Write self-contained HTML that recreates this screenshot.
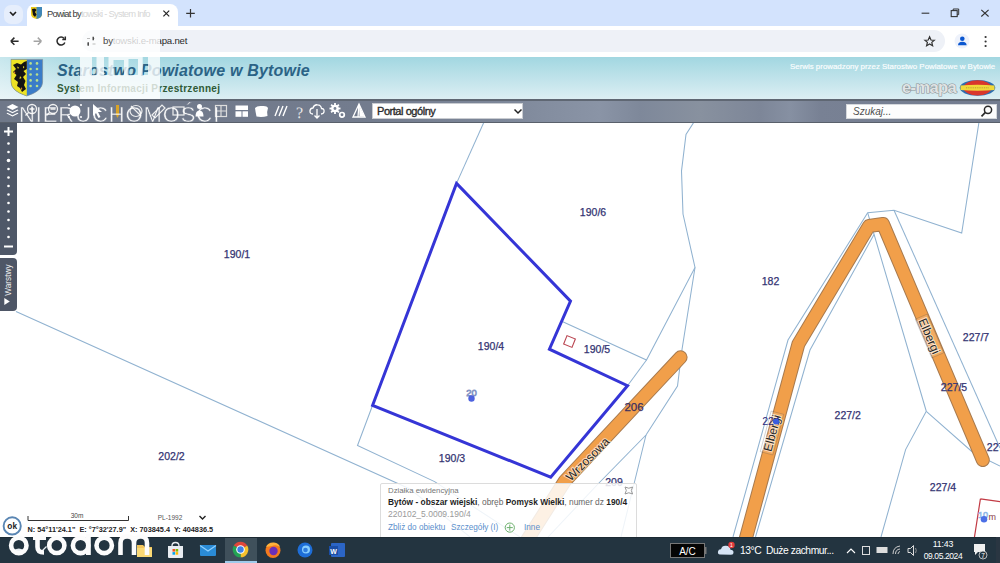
<!DOCTYPE html>
<html><head><meta charset="utf-8">
<style>
*{margin:0;padding:0;box-sizing:border-box}
html,body{width:1000px;height:563px;overflow:hidden;background:#fff;font-family:"Liberation Sans",sans-serif}
.a{position:absolute;white-space:pre}
#tabbar{left:0;top:0;width:1000px;height:26px;background:#d3e3fd}
#tab{left:27px;top:4px;width:151px;height:24px;background:#fff;border-radius:8px 8px 0 0}
#addr{left:0;top:26px;width:1000px;height:31px;background:#fff}
#pill{left:82px;top:30px;width:863px;height:22px;background:#eef1f7;border-radius:11px}
#header{left:0;top:57px;width:1000px;height:42px;background:linear-gradient(90deg,rgba(255,255,255,0.4),rgba(255,255,255,0.15) 60px,rgba(255,255,255,0) 160px),linear-gradient(#a2d7e1,#dceef3)}
#toolbar{left:0;top:99px;width:1000px;height:24px;background:linear-gradient(90deg,#6f7889 0%,#737c8e 37%,#7d8799 50%,#848ea0 55%,#8a94a6 60%,#7e889a 64%,#88919f 70%,#7d8698 76%,#8690a2 79%,#788194 82%,#737c8f 100%);border-top:2px solid #5f6773;border-bottom:1px solid #59606b}
#map{left:0;top:123px;width:1000px;height:414px;background:#fff}
#taskbar{left:0;top:537px;width:1000px;height:26px;background:#233440;border-top:1px solid #1c2a33}
.lbl{position:absolute;font-size:10px;color:#2b2b7c;white-space:pre;line-height:10px}
</style></head><body>
<div id="tabbar" class="a"></div>
<div id="tab" class="a"></div>
<!-- tab bar content -->
<div class="a" style="left:4px;top:5px;width:19px;height:19px;border-radius:7px;background:#e6eefc"></div>
<svg class="a" style="left:0;top:0" width="200" height="28">
  <path d="M10 12 L13 15 L16 12" fill="none" stroke="#1f1f1f" stroke-width="1.6"/>
  <path d="M31 7 H42 V14 Q42 18 36.5 19 Q31 18 31 14 Z" fill="#e8c81a"/>
  <path d="M36.5 7 H42 V14 Q42 18 36.5 19 Z" fill="#3f86b8"/>
  <path d="M32 9 L35 8.5 L36.5 10 L35 12 L36.5 14.5 L35 17 L33 15 L32.5 12 Z" fill="#111"/>
  <path d="M163.4 10.6 L169.2 16.4 M169.2 10.6 L163.4 16.4" stroke="#222" stroke-width="1.15"/>
  <path d="M190.5 9 V17.6 M186.2 13.3 H194.8" stroke="#333" stroke-width="1.2"/>
</svg>
<div class="a" style="left:47px;top:8px;font-size:9.4px;letter-spacing:-0.75px;color:#3a3a3a">Powiat by<span style="color:#d6d6d6">towski - System Info</span></div>
<svg class="a" style="left:900px;top:0" width="100" height="26">
  <path d="M21.6 13.2 H29.3" stroke="#333" stroke-width="1.1"/>
  <rect x="51.2" y="10.6" width="6" height="6" fill="none" stroke="#333" stroke-width="1.1"/>
  <path d="M53.2 10.6 V9 H58.7 V14.6 H57.2" fill="none" stroke="#333" stroke-width="1"/>
  <path d="M81.3 9.8 L88.6 16.5 M88.6 9.8 L81.3 16.5" stroke="#333" stroke-width="1.1"/>
</svg>
<div id="addr" class="a"></div>
<div id="pill" class="a"></div>
<svg class="a" style="left:0;top:26px" width="1000" height="31">
  <path d="M10.8 15.2 H18.6 M10.8 15.2 L14.4 11.6 M10.8 15.2 L14.4 18.8" fill="none" stroke="#2b2b2b" stroke-width="1.5"/>
  <path d="M33.6 15.2 H41.4 M41.4 15.2 L37.8 11.6 M41.4 15.2 L37.8 18.8" fill="none" stroke="#a4a4a4" stroke-width="1.5"/>
  <path d="M64.2 12.6 A4 4 0 1 0 64.8 16.4" fill="none" stroke="#2b2b2b" stroke-width="1.5"/>
  <path d="M65.3 10.6 V13.6 H62.3" fill="none" stroke="#2b2b2b" stroke-width="1.5"/>
  
  <path d="M929.6 10.8 L931 14 L934.3 14.3 L931.8 16.4 L932.6 19.8 L929.6 18 L926.6 19.8 L927.4 16.4 L924.9 14.3 L928.2 14 Z" fill="none" stroke="#333" stroke-width="1.2"/>
  <circle cx="962" cy="15" r="7.5" fill="#eef2fb"/>
  <circle cx="962.3" cy="12.8" r="2.3" fill="#0b57d0"/>
  <path d="M958 19.3 Q958 15.8 962.3 15.8 Q966.6 15.8 966.6 19.3 Z" fill="#0b57d0"/>
  <circle cx="985.6" cy="11" r="1.1" fill="#333"/><circle cx="985.6" cy="15.5" r="1.1" fill="#333"/><circle cx="985.6" cy="20" r="1.1" fill="#333"/>
</svg>
<div class="a" style="left:103px;top:35px;font-size:9.6px;line-height:12px;color:#2a2a2a;letter-spacing:-0.2px">bytowski.e-mapa.net</div>

<!-- header -->
<div id="header" class="a"></div>
<svg class="a" style="left:8px;top:57px" width="40" height="42">
  <path d="M3 2.4 H34.6 V25 Q34.6 34 18.8 39 Q3 34 3 25 Z" fill="#3a7cc8"/>
  <path d="M3 2.4 H18.8 V39 Q3 34 3 25 Z" fill="#ece324"/>
  <path d="M5 8 L9 6 L13 7.5 L16 5 L18.8 4 L18.8 12 L15.5 14 L18 17 L15 20 L17.5 24 L16 28 L18 32 L14 35 L12 31 L9 29 L10 25 L6 22 L8.5 18 L5 15 L8 12 Z" fill="#141414"/>
  <path d="M9 9.5 L11 10.5 L10 12 Z M12 19 L13.5 21 L11.5 22 Z M7.5 26 L9 27.5 L7 29 Z M15 9 L16.5 10 L15 11.5 Z" fill="#e9d82a"/>
  <path d="M6 14 L7.5 16 L6 17 Z M13 30 L14.5 32 L13 33 Z" fill="#d9802a"/>
  <path d="M3 2.4 H34.6 V25 Q34.6 34 18.8 39 Q3 34 3 25 Z" fill="none" stroke="#7d8a90" stroke-width="0.6"/>
  <g fill="#b9e08c">
    <circle cx="22.6" cy="6.4" r="1.3"/><circle cx="29" cy="6.4" r="1.3"/>
    <circle cx="22.6" cy="12" r="1.3"/><circle cx="29" cy="12" r="1.3"/>
    <circle cx="22.6" cy="17.5" r="1.3"/><circle cx="29" cy="17.5" r="1.3"/>
    <circle cx="22.6" cy="23.4" r="1.3"/><circle cx="29" cy="23.4" r="1.3"/>
    <circle cx="22.6" cy="29" r="1.3"/><circle cx="29" cy="29" r="1.3"/>
  </g>
</svg>
<div class="a" style="left:57px;top:62px;font-size:16px;font-weight:bold;font-style:italic;color:#2b6386;letter-spacing:0.2px">Starostwo Powiatowe w Bytowie</div>
<div class="a" style="left:57px;top:83px;font-size:10px;font-weight:bold;color:#2f5a36;letter-spacing:0.3px">System Informacji Przestrzennej</div>
<div class="a" style="left:790px;top:62px;font-size:7.9px;line-height:10px;color:#fbfeff;-webkit-text-stroke:0.15px #fff">Serwis prowadzony przez Starostwo Powiatowe w Bytowie</div>
<svg class="a" style="left:895px;top:72px" width="105" height="27">
  <text x="7" y="21" font-family="Liberation Sans" font-weight="bold" font-size="16.5" letter-spacing="-0.6" fill="#dfe3e4" stroke="#8b9093" stroke-width="1.1" paint-order="stroke">e-mapa</text>
  <ellipse cx="82.5" cy="15.8" rx="17.8" ry="7.9" fill="#2e6db0"/>
  <ellipse cx="82.5" cy="15.8" rx="14" ry="7.6" fill="#d9372c"/>
  <path d="M65.5 13.5 Q82.5 12 99.5 13.5 L99.6 18 Q82.5 19.5 65.5 18 Z" fill="#f0d93a"/>
  <path d="M71 15.8 H94" stroke="#b9a030" stroke-width="1" stroke-dasharray="1 0.8"/>
</svg>

<!-- toolbar -->
<div id="toolbar" class="a"></div>
<svg class="a" style="left:0;top:99px" width="380" height="24">
  <g fill="#fff">
    <path d="M12.5 5 L18.5 8 L12.5 11 L6.5 8 Z"/>
    <path d="M7.5 10.5 L12.5 13 L17.5 10.5 L18.5 11.3 L12.5 14.3 L6.5 11.3 Z"/>
    <path d="M7.5 13.8 L12.5 16.3 L17.5 13.8 L18.5 14.6 L12.5 17.6 L6.5 14.6 Z"/>
  </g>
  <g fill="none" stroke="#f2f2f2" stroke-width="1.3">
    <circle cx="32" cy="10" r="4.5"/><path d="M29.5 10 H34.5 M32 7.5 V12.5 M28.8 13.2 L25.5 16.5"/>
    <circle cx="53" cy="10" r="4.5"/><path d="M50.5 10 H55.5 M49.8 13.2 L46.5 16.5"/>
  </g>
  <circle cx="75" cy="12" r="5.5" fill="#fff"/>
  <g fill="#fff"><circle cx="69" cy="6" r="1"/><circle cx="81" cy="6" r="1"/><circle cx="69" cy="18" r="1"/><circle cx="81" cy="18" r="1"/></g>
  <path d="M93 5 L93 17 L96 14 L98.5 19 L100.5 18 L98 13 L102 13 Z" fill="#fff"/>
  <path d="M116 6 L119 6 L119 16 L117.5 19 L116 16 Z" fill="#d9a428"/>
  <g fill="none" stroke="#eee" stroke-width="1.2">
    <ellipse cx="136" cy="12" rx="6" ry="5.5"/><path d="M131 7 L141 17"/>
    <path d="M152 16 L162 6 L165 9 L155 19 Z"/>
    <rect x="173" y="8" width="11" height="8"/>
  </g>
  <path d="M197 7.5 A2.5 2.5 0 1 1 202 7.5 A2.5 2.5 0 1 1 197 7.5 M195.5 17.5 Q195.5 11.5 199.5 11.5 Q203.5 11.5 203.5 17.5 Z" fill="#fff"/>
  <g fill="none" stroke="#ddd" stroke-width="1.2"><rect x="215.5" y="6.5" width="11" height="11"/><path d="M215.5 12 H226.5 M221 6.5 V17.5"/></g>
  <g fill="#fff">
    <rect x="235.5" y="6.5" width="12.5" height="4.5"/><rect x="235.5" y="12.3" width="6" height="5.5"/><rect x="242.5" y="12.3" width="5.5" height="5.5"/>
    <path d="M255 9 Q257 6.5 262 7 Q267 6.5 268 9 Q266.5 13 267.5 17 Q262 18.5 256.5 17.5 Q255.5 13 255 9 Z"/>
  </g>
  <path d="M279 7 L275 17 M283 7 L279 17 M287 7 L283 17" stroke="#fff" stroke-width="1.4"/>
  <text x="299.5" y="18.5" font-family="Liberation Serif" font-size="16" fill="#e8e8e8" text-anchor="middle" style="text-rendering:geometricPrecision">?</text>
  <g fill="none" stroke="#fff" stroke-width="1.3">
    <path d="M313 15 Q309.5 15 310 11.5 Q310.5 9 313 9 Q314 5.5 317.5 5.8 Q321 6 321.5 9.5 Q324.5 9.5 324 13 Q323.5 15 321 15"/>
    <path d="M317 10 V19 M314.5 16.5 L317 19 L319.5 16.5"/>
  </g>
  <g fill="#fff"><circle cx="335" cy="9.5" r="3.8"/><rect x="334.1" y="4" width="1.8" height="11" transform="rotate(0 335 9.5)"/><rect x="334.1" y="4" width="1.8" height="11" transform="rotate(45 335 9.5)"/><rect x="334.1" y="4" width="1.8" height="11" transform="rotate(90 335 9.5)"/><rect x="334.1" y="4" width="1.8" height="11" transform="rotate(135 335 9.5)"/></g><circle cx="335" cy="9.5" r="1.4" fill="#7a8495"/>
  <circle cx="342" cy="15.8" r="2.3" fill="none" stroke="#fff" stroke-width="1.7"/>
  <path d="M353 18 L359 5 L365 18 Z M359 5 L358 18" fill="none" stroke="#fff" stroke-width="1.3"/>
  <path d="M359 6 L364.5 17.5 L359.5 17.5 Z" fill="#fff"/>
</svg>
<div class="a" style="left:372px;top:103px;width:151px;height:16px;background:#fff;border:1px solid #c9ccd1"></div>
<div class="a" style="left:377px;top:104px;font-size:11px;font-weight:normal;color:#2a2a2a;letter-spacing:-0.45px;line-height:14px;-webkit-text-stroke:0.35px #2a2a2a">Portal ogólny</div>
<svg class="a" style="left:512px;top:106px" width="12" height="10"><path d="M2.5 3.5 L6 7 L9.5 3.5" fill="none" stroke="#222" stroke-width="1.5"/></svg>
<div class="a" style="left:846px;top:104px;width:151px;height:15px;background:#fdfdfd;border:1px solid #d5d8dc"></div>
<div class="a" style="left:853px;top:105px;font-size:10px;font-style:italic;color:#505050;line-height:13px">Szukaj...</div>
<svg class="a" style="left:978px;top:103px" width="16" height="16"><circle cx="10" cy="6.8" r="3.6" fill="none" stroke="#2a2a2a" stroke-width="1.5"/><path d="M7.4 9.4 L3.5 13.3" stroke="#2a2a2a" stroke-width="1.7"/></svg>
<svg class="a" style="left:0;top:99px" width="240" height="26">
  <defs><mask id="nm" maskUnits="userSpaceOnUse" x="0" y="0" width="240" height="26"><rect width="240" height="26" fill="#000"/><text x="19" y="22.6" font-family="Liberation Sans" font-size="22" letter-spacing="0.9" fill="#fff" stroke="#000" stroke-width="0.5" style="white-space:pre">NIERUCHOMOŚCI</text></mask></defs>
  <rect width="240" height="26" fill="#fff" fill-opacity="0.92" mask="url(#nm)"/>
</svg>

<!-- map -->
<div id="map" class="a"></div>
<svg class="a" style="left:0;top:0" width="1000" height="563" viewBox="0 0 1000 563">
  <defs><clipPath id="mc"><rect x="0" y="123" width="1000" height="414"/></clipPath></defs>
  <g clip-path="url(#mc)">
  <g fill="none" stroke="#90b2d0" stroke-width="1.05">
    <path d="M484 122 L456.5 183.4"/>
    <path d="M694 122 L686 134.4 L681.5 171 L683 214 L695 267.5 L646.5 360 L562.8 321.8"/>
    <path d="M646.5 360 L627.5 385.7"/>
    <path d="M695 267.5 L682 349.5 L677.5 386 L646 435 L598 484 L548 537"/>
    <path d="M646 435 L634 484 L621 537"/>
    <path d="M16 311.4 L410 489 L470 537"/>
    <path d="M372.6 405.3 L357.5 445.5 L434.6 481.6 L520 537"/>
    <path d="M979 122 L961.7 233 L894 210.2 L867.7 212.8 L788 340 L733 537"/>
    <path d="M894 210.2 L1000 448"/>
    <path d="M867.7 212.8 L926.3 411.3 L905.6 449.6 L881 537"/>
    <path d="M926.3 411.3 L973.5 453 L1000 466"/>
    <path d="M874 234.5 L810 350 L755.5 537"/>
  </g>
  <g fill="none" stroke-linecap="round" stroke-linejoin="round">
    <path d="M680.6 357.3 L564.7 481.2 L524 545" stroke="#a77a4f" stroke-width="14"/>
    <path d="M680.6 357.3 L564.7 481.2 L524 545" stroke="#f19f4a" stroke-width="12"/>
    <path d="M740 560 L798.4 344 L869 226 L883 224 L982.8 460" stroke="#a77a4f" stroke-width="14" stroke-linecap="round" stroke-linejoin="round"/>
    <path d="M740 560 L798.4 344 L869 226 L883 224 L982.8 460" stroke="#f19f4a" stroke-width="12" stroke-linejoin="round"/>
  </g>
  <path d="M456.5 183.4 L570.5 301.1 L549.4 349.2 L627.5 385.7 L550.7 477.2 L372.6 405.3 Z" fill="none" stroke="#3535d6" stroke-width="3" stroke-linejoin="miter"/>
  <rect x="565" y="337" width="9" height="9" fill="none" stroke="#b9434f" stroke-width="1.1" transform="rotate(22 569.5 341.5)"/>
  <path d="M980.4 498.9 L974 540 M980.4 498.9 L1000 501.6" fill="none" stroke="#c23a44" stroke-width="1.2"/>
  <g font-family="Liberation Sans" font-size="10.5" fill="#333372" stroke="#333372" stroke-width="0.25" text-anchor="middle">
    <text x="237" y="258">190/1</text>
    <text x="593" y="216">190/6</text>
    <text x="770.5" y="285">182</text>
    <text x="491" y="350">190/4</text>
    <text x="597" y="353">190/5</text>
    <text x="634" y="411" font-size="11.5" fill="#3b2a55">206</text>
    <text x="171.5" y="459.5">202/2</text>
    <text x="452" y="462">190/3</text>
    <text x="614" y="485.5">209</text>
    <text x="847.7" y="419">227/2</text>
    <text x="976" y="341">227/7</text>
    <text x="954" y="391">227/5</text>
    <text x="1000" y="451">227/3</text>
    <text x="943" y="490.5">227/4</text>
  </g>
  <g fill="rgba(255,255,255,0.12)" stroke="#4a4a4a" stroke-width="0.5" stroke-opacity="0.45">
    <rect x="-21" y="-6.5" width="42" height="13" transform="translate(929.5 336) rotate(67)"/>
    <rect x="-21" y="-6.5" width="42" height="13" transform="translate(772 433) rotate(-75)"/>
  </g>
  <g font-family="Liberation Sans" font-size="12" fill="#262626" text-anchor="middle" stroke="#fff" stroke-width="2" paint-order="stroke" stroke-opacity="0.6">
    <text transform="translate(587.5 459) rotate(-45)" y="4.3">Wrzosowa</text>
    <text transform="translate(929.5 336) rotate(67)" y="4.3">Elbergi</text>
    <text transform="translate(772 433) rotate(-75)" y="4.3">Elbergi</text>
  </g>
  <text x="771" y="425" font-family="Liberation Sans" font-size="10.5" fill="#2c2c7e" text-anchor="middle">224</text>
  <circle cx="776" cy="421.5" r="3" fill="#3a5ee0"/>
  <text x="471.5" y="396" font-family="Liberation Sans" font-size="9.5" fill="none" stroke="#8494c4" stroke-width="0.8" text-anchor="middle">20</text>
  <circle cx="471.5" cy="398.5" r="3.2" fill="#4d62df"/>
  <text x="983" y="518" font-family="Liberation Sans" font-size="9" fill="none" stroke="#8fb8e8" stroke-width="0.7" text-anchor="middle">10</text>
  <circle cx="984" cy="519.3" r="3.3" fill="#4b6fe6"/>
  <text x="988.5" y="519.5" font-family="Liberation Sans" font-size="9" fill="#8a3a48">m</text>
  </g>
</svg>

<!-- left map controls -->
<div class="a" style="left:0;top:123px;width:17px;height:132px;background:#4f5868;border-radius:0 0 4px 0"></div>
<svg class="a" style="left:0;top:123px" width="17" height="132">
  <path d="M8.5 4 V13 M4 8.5 H13" stroke="#fff" stroke-width="2"/>
  <g fill="#fff">
    <circle cx="8.5" cy="20.5" r="1.3"/><circle cx="8.5" cy="29" r="1.3"/><circle cx="8.5" cy="37.5" r="1.8"/><circle cx="8.5" cy="46" r="1.3"/>
    <circle cx="8.5" cy="54.5" r="1.3"/><circle cx="8.5" cy="63" r="1.3"/><circle cx="8.5" cy="71.5" r="1.3"/><circle cx="8.5" cy="80" r="1.3"/>
    <circle cx="8.5" cy="88.5" r="1.3"/><circle cx="8.5" cy="97" r="1.3"/><circle cx="8.5" cy="105.5" r="1.3"/><circle cx="8.5" cy="114" r="1.3"/>
  </g>
  <path d="M4 123.5 H13" stroke="#fff" stroke-width="2"/>
</svg>
<div class="a" style="left:0;top:258px;width:17px;height:52.5px;background:#4e5666;border-radius:0 4px 4px 0"></div>
<svg class="a" style="left:0;top:258px" width="17" height="53">
  <path d="M4.3 40 L9.8 43.5 L4.3 47 Z" fill="#fff"/>
  <text transform="translate(10.6 37.8) rotate(-90)" font-family="Liberation Sans" font-size="8.3" fill="#f2f2f2">Warstwy</text>
</svg>

<!-- bottom-left controls -->
<svg class="a" style="left:0;top:505px" width="230" height="32">
  <circle cx="12.2" cy="20.9" r="8.6" fill="#fff" stroke="#5a86b3" stroke-width="1.9"/>
  <text x="12.2" y="23.8" font-family="Liberation Sans" font-size="8.3" font-weight="bold" fill="#222" text-anchor="middle">ok</text>
  <path d="M28 11 V15.5 H128.5 V11" fill="none" stroke="#333" stroke-width="1"/>
  <text x="77" y="13" font-family="Liberation Sans" font-size="6.5" fill="#444" text-anchor="middle">30m</text>
  <text x="170" y="15" font-family="Liberation Sans" font-size="6.5" fill="#555" text-anchor="middle">PL-1992</text>
  <path d="M199.5 11 L202.5 14 L205.5 11" fill="none" stroke="#222" stroke-width="1.4"/>
  <text x="27.5" y="26.6" font-family="Liberation Sans" font-size="7.3" font-weight="bold" fill="#222" letter-spacing="0" style="white-space:pre">N: 54°11'24.1"  E: °7°32'27.9"  X: 703845.4  Y: 404836.5</text>
</svg>

<!-- popup -->
<div class="a" style="left:380px;top:483px;width:257px;height:60px;background:rgba(255,255,255,0.85);border:1px solid #dcdcdc;border-radius:2px"></div>
<div class="a" style="left:388px;top:486px;font-size:7.8px;line-height:10px;color:#777">Działka ewidencyjna</div>
<div class="a" style="left:388px;top:497px;font-size:8.4px;line-height:11px;color:#666"><b style="color:#1f1f1f">Bytów - obszar wiejski</b>, obręb <b style="color:#1f1f1f">Pomysk Wielki</b>, numer dz <b style="color:#1f1f1f">190/4</b></div>
<div class="a" style="left:388px;top:509px;font-size:8.5px;line-height:11px;color:#9a9a9a">220102_5.0009.190/4</div>
<div class="a" style="left:388px;top:522px;font-size:8.2px;line-height:11px;color:#5b8fcc">Zbliż do obiektu</div>
<div class="a" style="left:451px;top:522px;font-size:8.2px;line-height:11px;color:#5b8fcc">Szczegóły (I)</div>
<div class="a" style="left:524px;top:522px;font-size:8.2px;line-height:11px;color:#5b8fcc">Inne</div>
<svg class="a" style="left:500px;top:480px" width="140" height="57">
  <circle cx="9.8" cy="47.6" r="4.6" fill="none" stroke="#6db06d" stroke-width="1"/>
  <path d="M9.8 44.6 V50.6 M6.8 47.6 H12.8" stroke="#6db06d" stroke-width="1"/>
  <path d="M125 7 Q128.8 9.5 132.6 7 Q130 10.5 132.6 14 Q128.8 11.5 125 14 Q127.6 10.5 125 7 Z" fill="none" stroke="#999" stroke-width="1"/>
</svg>

<!-- taskbar -->
<div id="taskbar" class="a"></div>
<div class="a" style="left:225px;top:538px;width:32px;height:25px;background:#3f505b"></div>
<div class="a" style="left:225px;top:560.5px;width:32px;height:2.5px;background:#9fcbeb"></div>
<svg class="a" style="left:0;top:537px" width="1000" height="26">
  <!-- windows / search / taskview under watermark -->
  <g fill="#e8eef2"><path d="M14 13 Q18.8 10 23.6 13 V14 H14 Z"/></g><path d="M42 14 L46.5 9.5" stroke="#e8eef2" stroke-width="1.3"/>
  <!-- folder -->
  <path d="M137 8 H143 L145 10 H152 V20 H137 Z" fill="#f2c55b"/>
  <rect x="137" y="11" width="15" height="9" fill="#fbd975"/>
  <!-- store -->
  <path d="M168 9 H183 V20 Q183 21 182 21 H169 Q168 21 168 20 Z" fill="#e9edf2"/>
  <path d="M172 9 Q172 5.5 175.5 5.5 Q179 5.5 179 9" fill="none" stroke="#e9edf2" stroke-width="1.3"/>
  <rect x="172.5" y="12" width="2.6" height="2.6" fill="#f25022"/><rect x="175.6" y="12" width="2.6" height="2.6" fill="#7fba00"/>
  <rect x="172.5" y="15.1" width="2.6" height="2.6" fill="#00a4ef"/><rect x="175.6" y="15.1" width="2.6" height="2.6" fill="#ffb900"/>
  <!-- mail -->
  <rect x="200" y="8" width="16" height="11" rx="1" fill="#2a8bd6"/>
  <path d="M200 8.5 L208 14 L216 8.5" fill="none" stroke="#8fd0ff" stroke-width="1.2"/>
  <!-- chrome -->
  <path d="M240.5 12.5 L233.745 8.6 A7.8 7.8 0 0 1 247.255 8.6 Z" fill="#e0463a"/>
  <path d="M240.5 12.5 L247.255 8.6 A7.8 7.8 0 0 1 240.5 20.3 Z" fill="#f6c02c"/>
  <path d="M240.5 12.5 L240.5 20.3 A7.8 7.8 0 0 1 233.745 8.6 Z" fill="#23a354"/>
  <circle cx="240.5" cy="12.5" r="4.3" fill="#fff"/><circle cx="240.5" cy="12.5" r="3.2" fill="#3d7fe6"/>
  <!-- firefox -->
  <circle cx="273" cy="13.5" r="7.5" fill="#f47a1e"/>
  <circle cx="273.5" cy="14" r="4.2" fill="#6b2fb8"/>
  <path d="M266 10 Q268 5 274 5.5 Q279 6 280 10 Q276 7 272 9 Z" fill="#ffb13b"/>
  <!-- edge/messenger -->
  <circle cx="305" cy="13" r="7.5" fill="#1e6ed8"/>
  <circle cx="306" cy="12.5" r="4" fill="#8ad0ff"/>
  <circle cx="305.5" cy="13" r="2.3" fill="#2f7de0"/>
  <!-- word -->
  <rect x="331" y="6" width="14" height="14" rx="1" fill="#2b65c6"/>
  <rect x="329" y="9" width="9" height="9" fill="#1b4ea6"/>
  <text x="333.5" y="16.5" font-family="Liberation Sans" font-size="7" font-weight="bold" fill="#fff" text-anchor="middle">W</text>
  <!-- A/C box -->
  <rect x="670.5" y="6.5" width="34" height="14" fill="#050505" stroke="#777" stroke-width="1"/>
  <rect x="704.5" y="10" width="2" height="7" fill="#777"/>
  <text x="687.5" y="17.5" font-family="Liberation Sans" font-size="10" fill="#fff" text-anchor="middle">A/C</text>
  <!-- weather -->
  <path d="M720 17.5 Q717.5 17.5 718 14.5 Q718.5 12 721 12.2 Q722 8.5 726 8.8 Q730 9 730.5 12.8 Q733.5 12.8 733.5 15.3 Q733.5 17.8 731 17.8 Z" fill="#d6e4f5"/>
  <circle cx="731.5" cy="8" r="3.2" fill="#e23b3b"/>
  <text x="731.5" y="10.3" font-family="Liberation Sans" font-size="5" fill="#fff" text-anchor="middle">1</text>
  <text x="740" y="17" font-family="Liberation Sans" font-size="10.3" letter-spacing="-0.45" fill="#fff" style="white-space:pre">13°C  Duże zachmur...</text>
  <path d="M847 16 L851 12 L855 16" fill="none" stroke="#fff" stroke-width="1.1"/>
  <rect x="862.5" y="9.5" width="7" height="8" fill="none" stroke="#ddd" stroke-width="1"/>
  <rect x="876.5" y="10" width="11" height="6" fill="#ddd"/>
  <path d="M893 17 Q893 10 900 9 M895.5 17 Q895.5 12.5 900 12 M898 17 Q898 15 900 14.5" fill="none" stroke="#ccc" stroke-width="1"/>
  <path d="M908 11.5 H910.5 L913.5 8.5 V18.5 L910.5 15.5 H908 Z" fill="none" stroke="#ddd" stroke-width="1"/>
  <path d="M915.5 11 Q917 13.5 915.5 16" fill="none" stroke="#aaa" stroke-width="0.8"/>
  <text x="943" y="10.3" font-family="Liberation Sans" font-size="8.8" letter-spacing="-0.2" fill="#fff" text-anchor="middle">11:43</text>
  <text x="943" y="21.6" font-family="Liberation Sans" font-size="8.5" letter-spacing="-0.4" fill="#fff" text-anchor="middle">09.05.2024</text>
  <path d="M974 7 H985 V15 H978 L975 18 V15 H974 Z" fill="#f0f0f0"/>
  <circle cx="983" cy="18" r="4" fill="#233440" stroke="#ddd" stroke-width="0.8"/>
  <text x="983" y="20.6" font-family="Liberation Sans" font-size="6.5" fill="#fff" text-anchor="middle">7</text>
  <rect x="996" y="0" width="4" height="26" fill="#2a3642"/>
</svg>

<!-- watermarks -->
<svg class="a" style="left:0;top:0" width="200" height="100"><path fill-rule="evenodd" fill="rgba(255,255,255,0.78)" d="M80 30 H160 V99 H80 Z M92 57 H96.5 V75 H92 Z M104 57 H108.5 V75 H104 Z M113.5 60 H124 V75 H113.5 Z M128.5 59 H138 V75 H128.5 Z M142.7 57 H148 V75 H142.7 Z"/></svg>
<svg class="a" style="left:80px;top:30px" width="40" height="25">
  <path d="M7 8.5 h3 M13 8.5 h1.5 M7 14 h1.5 M12.5 14 h3" stroke="#bbb" stroke-width="1.2"/>
  <path d="M13.2 6.8 V10.2 M8.2 12.3 V15.7" stroke="#333" stroke-width="1.3"/>
</svg>
<div class="a" style="left:103px;top:35px;font-size:9.6px;line-height:12px;color:#555;letter-spacing:-0.2px">by</div>
<svg class="a" style="left:0;top:527px" width="160" height="36">
  <g fill="none" stroke="#fcfcfc" stroke-width="4.6">
    <circle cx="18.8" cy="18.4" r="7.7"/>
    <circle cx="56.8" cy="18.4" r="7.6"/>
    <circle cx="80.6" cy="18.4" r="7.7"/>
    <circle cx="104.2" cy="18.4" r="7.7"/>
    <path d="M37.5 6 V20 Q37.5 25.5 44 25.5"/>
    <path d="M120.5 28 V16 Q120.5 9.5 127.2 9.5 Q134 9.5 134 16 V28 M134 16 Q134 9.5 140.8 9.5 Q147 9.5 147 16 V28"/>
  </g>
  <rect x="33" y="9" width="13" height="4" fill="#fcfcfc"/>
  <rect x="86" y="7" width="4.8" height="21" fill="#fcfcfc"/>
</svg>
</body></html>
